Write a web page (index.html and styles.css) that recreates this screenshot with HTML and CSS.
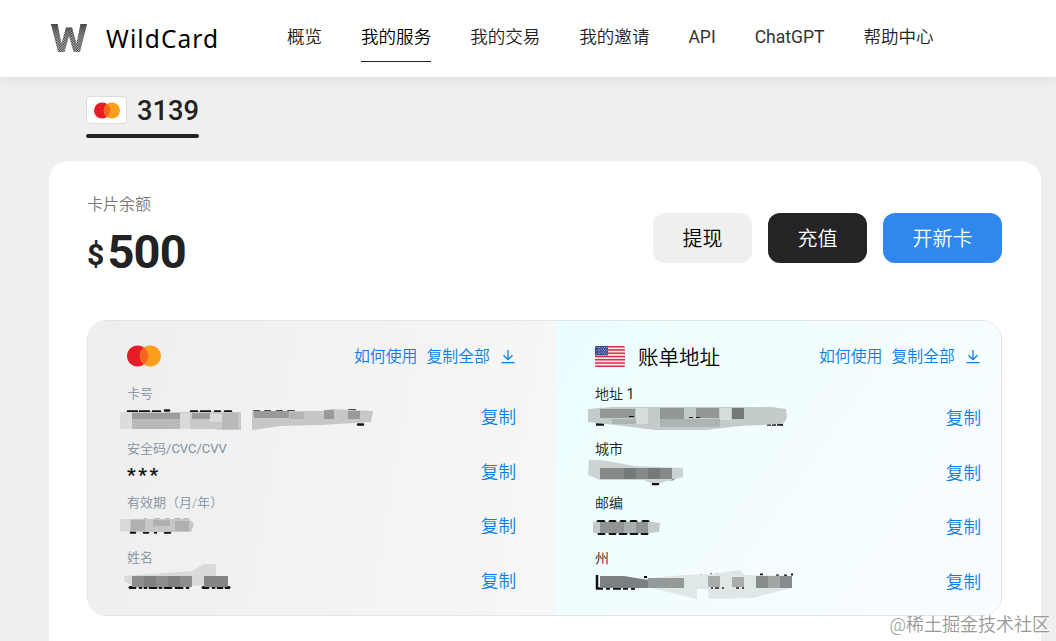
FILE: index.html
```
<!DOCTYPE html>
<html lang="zh-CN">
<head>
  <meta charset="UTF-8">
  <meta name="viewport" content="width=device-width, initial-scale=1.0">
  <title>WildCard - 我的服务</title>
  <link rel="stylesheet" href="styles.css">
</head>
<body>
<svg width="0" height="0" class="defs">
  <symbol id="mastercard" viewBox="0 0 34 22">
    <circle cx="10.6" cy="11" r="10.6" fill="#e81c24"/>
    <circle cx="23.4" cy="11" r="10.6" fill="#f99f1b"/>
    <path d="M17 2.5a10.6 10.6 0 0 1 0 17a10.6 10.6 0 0 1 0-17z" fill="#f4661e"/>
  </symbol>
  <symbol id="download" viewBox="0 0 14 15">
    <path d="M7 1v9.500M2.500 6.200L7 10.700l4.500-4.500M.5 13.700h13" fill="none" stroke="currentColor" stroke-width="1.300"/>
  </symbol>
</svg>

<header class="header">
  <a class="logo">
    <svg width="36" height="29" viewBox="0 0 36 29">
      <defs>
        <pattern id="dots" width="2.600" height="2.600" patternUnits="userSpaceOnUse">
          <rect width="2.600" height="2.600" fill="#ddd"/>
          <rect width="1.300" height="1.300" fill="#111"/>
          <rect x="1.300" y="1.300" width="1.300" height="1.300" fill="#111"/>
        </pattern>
        <linearGradient id="fade" x1="0" y1="0" x2="0" y2="1">
          <stop offset="0" stop-color="#222" stop-opacity=".6"/>
          <stop offset=".5" stop-color="#777" stop-opacity=".2"/>
          <stop offset="1" stop-color="#aaa" stop-opacity=".1"/>
        </linearGradient>
      </defs>
      <path d="M0 0h6.500l4 19.500 4.500-16h6l4.500 16 4-19.500H36l-7 28h-6.500L18 12l-4.500 16H7z" fill="url(#dots)"/>
      <path d="M0 0h6.500l4 19.500 4.500-16h6l4.500 16 4-19.500H36l-7 28h-6.500L18 12l-4.500 16H7z" fill="url(#fade)"/>
    </svg>
    <span class="logo-text">WildCard</span>
  </a>
  <nav class="nav">
    <a>概览</a>
    <a class="active">我的服务</a>
    <a>我的交易</a>
    <a>我的邀请</a>
    <a class="latin">API</a>
    <a class="latin">ChatGPT</a>
    <a>帮助中心</a>
  </nav>
</header>

<div class="tabs">
  <div class="tab">
    <span class="tab-icon"><svg width="26" height="17"><use href="#mastercard"/></svg></span>
    <span>3139</span>
  </div>
</div>

<main class="panel">
  <div class="summary">
    <div>
      <div class="balance-label">卡片余额</div>
      <div class="balance"><span class="currency">$</span>500</div>
    </div>
    <div class="actions">
      <button class="btn btn-light">提现</button>
      <button class="btn btn-dark">充值</button>
      <button class="btn btn-blue">开新卡</button>
    </div>
  </div>

  <div class="detail">
    <section class="card-info">
      <div class="detail-head">
        <svg width="34" height="22"><use href="#mastercard"/></svg>
        <div class="links">
          <a>如何使用</a>
          <a>复制全部</a>
          <svg width="14" height="15"><use href="#download"/></svg>
        </div>
      </div>
      <div class="row">
        <div class="label">卡号</div>
        <div class="value"><a class="copy">复制</a></div>
        <svg class="mask" viewBox="117 400 280 40">
          <path d="M128 411.500h9m3 0h9m4 0h7m5-1h4m22 1h6m4 0h9m5 0h5m5 0h6m23 0h5m6 0h5m7 0h5m6 0h6m31 0h2m10 0h5m7-1h6M358 424.500h5" stroke="#111" stroke-width="2.500" stroke-linecap="round"/>
          <path d="M120 412h121v18h-20l-10-1h-91z" fill="#c9c9c9"/>
          <path d="M120 412h12v17h-12z" fill="#dcdcdc"/>
          <path d="M132 413h48v6h-48zM192 413h18v6h-18z" fill="#9c9c9c"/>
          <path d="M180 413h10v16h-10zM210 414h12v8h-12z" fill="#dadada"/>
          <path d="M132 419h48v10h-48zM222 413h16v16h-16z" fill="#b9b9b9"/>
          <path d="M252 411h70l10-2 41 2-2 11-50 3-40 1-29 4z" fill="#c7c7c7"/>
          <path d="M254 411h35v7h-35zM324 410h10v9h-10zM348 411h12v8h-12z" fill="#9a9a9a"/>
          <path d="M290 412h14v7h-14z" fill="#b4b4b4"/>
        </svg>
      </div>
      <div class="row">
        <div class="label">安全码<span class="latin">/CVC/CVV</span></div>
        <div class="value"><span class="stars">***</span><a class="copy">复制</a></div>
      </div>
      <div class="row">
        <div class="label">有效期（月/年）</div>
        <div class="value"><a class="copy">复制</a></div>
        <svg class="mask" viewBox="117 509 280 40">
          <path d="M131 532.500h4m9 0h4m7 0h1m9 0h5M144 520h2m9 0h4m7 0h3m6 0h5m4 0h4" stroke="#111" stroke-width="2.500" stroke-linecap="round"/>
          <path d="M120 519h69l5 5-3 8h-50l-21-1z" fill="#c6c6c6"/>
          <path d="M120 519h10v12h-10z" fill="#d9d9d9"/>
          <path d="M131 520h14v11h-14zM153 520h17v6h-17zM175 521h14v10h-14z" fill="#b0b0b0"/>
        </svg>
      </div>
      <div class="row">
        <div class="label">姓名</div>
        <div class="value"><a class="copy">复制</a></div>
        <svg class="mask" viewBox="117 564 280 40">
          <path d="M130 587.500h5m5 0h1m4 0h1m4 0h6m4 0h1m4 0h6m5 0h6m5 0h1m15 0h5m5 0h1m4 0h4m4 0h3" stroke="#111" stroke-width="3" stroke-linecap="round"/>
          <path d="M124 576l68-5 12-7h12v12h12v10l-96-1-7-3z" fill="#dadada"/>
          <path d="M132 576h60v11h-60z" fill="#8d8d8d"/>
          <path d="M144 576h12v11h-12zM168 576h12v11h-12z" fill="#7f7f7f"/>
          <path d="M204 576h24v11h-24z" fill="#858585"/>
        </svg>
      </div>
    </section>

    <section class="address">
      <div class="detail-head">
        <div class="title">
          <svg width="30" height="21" viewBox="0 0 30 21">
            <clipPath id="round"><rect width="30" height="21" rx="1.500"/></clipPath>
            <g clip-path="url(#round)">
              <rect width="30" height="21" fill="#fbe6ea"/>
              <path d="M0 .8h30M0 4.030h30M0 7.260h30M0 10.500h30M0 13.730h30M0 16.960h30M0 20.200h30" stroke="#e02a48" stroke-width="1.620"/>
              <rect width="13" height="9.300" fill="#36458c"/>
              <path d="M1.500 1.500h11M1.500 4.600h11M1.500 7.700h11M3 3.050h9M3 6.150h9" stroke="#c3c8e2" stroke-width=".9" stroke-dasharray="1 1.500"/>
            </g>
          </svg>
          <span>账单地址</span>
        </div>
        <div class="links">
          <a>如何使用</a>
          <a>复制全部</a>
          <svg width="14" height="15"><use href="#download"/></svg>
        </div>
      </div>
      <div class="row">
        <div class="label">地址 <span class="latin">1</span></div>
        <div class="value"><a class="copy">复制</a></div>
        <svg class="mask" viewBox="585 400 280 40">
          <path d="M596 424.500h8M767 424.500h4m1 0h4m1 0h6" stroke="#111" stroke-width="2.500"/>
          <path d="M588 409l24-2h160l14 2 1 9-4 6-43 2-35 4h-50l-40-5-27-3z" fill="#c4cbcb"/>
          <path d="M600 409h35v9h-35zM660 408h24v11h-24zM696 408h23v10h-23z" fill="#929898"/>
          <path d="M732 408h12v11h-12z" fill="#747a7a"/>
          <path d="M636 408h12v16h-12zM720 408h11v12h-11z" fill="#d5dddd"/>
          <path d="M612 419h24v5h-24zM660 419h60v8h-60z" fill="#adb4b4"/>
          <path d="M629 416.500h5M689 417.500h4m3 0h4" stroke="#111" stroke-width="1.200"/>
        </svg>
      </div>
      <div class="row">
        <div class="label">城市</div>
        <div class="value"><a class="copy">复制</a></div>
        <svg class="mask" viewBox="585 455 280 40">
          <path d="M653 484h5M670 479h3" stroke="#111" stroke-width="2.500" stroke-linecap="round"/>
          <path d="M589 460h12l34 6 48 2v9l-23 6h-10l-6-3h-44l-12-5z" fill="#ccd3d3"/>
          <path d="M600 468h72v11h-72z" fill="#858989"/>
          <path d="M624 468h12v11h-12zM648 468h12v11h-12z" fill="#747979"/>
        </svg>
      </div>
      <div class="row">
        <div class="label">邮编</div>
        <div class="value"><a class="copy">复制</a></div>
        <svg class="mask" viewBox="585 509 280 40">
          <path d="M598 521.500h6m6 0h5m6 0h4m6 0h5m7 0h5M599 533.500h5m6 0h5m5 0h6m5 0h6m5 0h5" stroke="#111" stroke-width="3" stroke-linecap="round"/>
          <path d="M593 522h60l7 1-1 9-12 1h-54z" fill="#c3caca"/>
          <path d="M600 522h24v11h-24zM636 522h12v11h-12z" fill="#8f9595"/>
          <path d="M624 522h12v11h-12z" fill="#a8afaf"/>
        </svg>
      </div>
      <div class="row">
        <div class="label">州</div>
        <div class="value"><a class="copy">复制</a></div>
        <svg class="mask" viewBox="585 564 280 40">
          <path d="M597 575v14M596 588.500h7m3 0h4m3 0h8m2 0h5m3 0h4" stroke="#111" stroke-width="2.500"/>
          <path d="M644 577h3M700 575.500h2m8-1h2m4 0h2m4 0h2M760 574.500h3m13 1h3m5 0h3m4-1h2" stroke="#111" stroke-width="2"/>
          <path d="M640 579l44-4 28-1 28-4 5 5 47 1v12l-40 10-43 1-1-10h-11v10l-50-12z" fill="#e0e7e7"/>
          <path d="M711 588h2m2 0h4m3 0h2m12 0h3m3 0h2" stroke="#222" stroke-width="1.500"/>
          <path d="M600 576h24l24 4 36-2v10l-32 0h-52z" fill="#7b8181"/>
          <path d="M648 578h36v10h-36z" fill="#949a9a"/>
          <path d="M708 576h12v11h-12zM732 577h12v10h-12z" fill="#a7adad"/>
          <path d="M756 576h36v12h-36z" fill="#868c8c"/>
          <path d="M768 576h12v12h-12z" fill="#a1a7a7"/>
        </svg>
      </div>
    </section>
  </div>
</main>

<div class="watermark">@稀土掘金技术社区</div>
</body>
</html>
```
FILE: styles.css
```
* {
  box-sizing: border-box;
}
body {
  margin: 0;
  height: 641px;
  overflow: hidden;
  background-color: #efefef;
  color: #222;
  font-family: Roboto, "Noto Sans CJK SC", sans-serif;
  display: flex;
  flex-direction: column;
}
.defs {
  position: absolute;
}
.latin {
  font-weight: 400;
}
.header {
  height: 77px;
  flex: none;
  background-color: #fff;
  display: flex;
  padding-left: 51px;
  box-shadow: 0 2px 12px rgba(0, 0, 0, 0.08);
}
.logo {
  width: 236px;
  display: flex;
  align-items: center;
  gap: 19px;
}
.logo-text {
  font-family: "Noto Sans", sans-serif;
  font-size: 24.5px;
  color: #000;
  letter-spacing: 1.1px;
}
.nav {
  display: flex;
  gap: 39px;
  align-items: flex-start;
}
.nav a {
  height: 62px;
  padding-top: 12px;
  line-height: 50px;
  font-size: 17.55px;
  font-weight: 350;
  color: #222;
  white-space: nowrap;
}
.nav a.active {
  border-bottom: 1px solid #222;
  color: #000;
}
.nav a.latin {
  font-weight: 400;
  color: #333;
}
.tabs {
  height: 84px;
  flex: none;
  padding: 15px 0 0 86px;
  display: flex;
  align-items: flex-start;
}
.tab {
  display: flex;
  align-items: center;
  gap: 10px;
  height: 46px;
  padding-bottom: 8px;
  position: relative;
  font-size: 27.3px;
  font-weight: 500;
}
.tab::after {
  content: "";
  position: absolute;
  left: 0;
  right: 0;
  bottom: 0;
  height: 4px;
  border-radius: 2px;
  background-color: #222;
}
.tab-icon {
  width: 41px;
  height: 28px;
  margin-bottom: 2px;
  display: flex;
  align-items: center;
  justify-content: center;
  background-color: #fff;
  border: 1px solid #ddd;
  border-radius: 4px;
}
.panel {
  flex: 1;
  margin: 0 15px 0 49px;
  padding: 32px 39px 0 38px;
  background-color: #fff;
  border-radius: 20px 20px 0 0;
}
.summary {
  display: flex;
  justify-content: space-between;
  height: 127px;
}
.balance-label {
  font-size: 16px;
  font-weight: 350;
  line-height: 24px;
  color: #777;
}
.balance {
  font-size: 47px;
  font-weight: 700;
  line-height: 70px;
  letter-spacing: -0.8px;
}
.currency {
  font-size: 30px;
  line-height: 1;
  margin-right: 4px;
  vertical-align: 3px;
}
.actions {
  display: flex;
  gap: 16px;
  padding-top: 20px;
}
.btn {
  height: 50px;
  padding: 0 29.5px 2px;
  border: none;
  border-radius: 12px;
  font-family: inherit;
  font-size: 20px;
  font-weight: 350;
  cursor: pointer;
}
.btn-light {
  background-color: #efefef;
  color: #000;
}
.btn-dark {
  background-color: #242424;
  color: #fff;
}
.btn-blue {
  background-color: #3088ee;
  color: #fff;
}
.detail {
  display: flex;
  height: 296px;
  border: 1px solid #e3e6e6;
  border-radius: 20px;
  overflow: hidden;
}
.card-info {
  width: 467px;
  padding: 7px 39px 0 39px;
  background: linear-gradient(100deg, #eee, #f7f7f7);
}
.address {
  flex: 1;
  padding: 7px 20px 0 40px;
  background: linear-gradient(125deg, #ecfdff, #f1fdfe 40%, #fafcff);
}
.detail-head {
  height: 56px;
  display: flex;
  align-items: center;
  justify-content: space-between;
}
.title {
  display: flex;
  align-items: center;
  gap: 13px;
  font-size: 20.5px;
  font-weight: 350;
  color: #000;
}
.links {
  display: flex;
  align-items: center;
  gap: 9px;
  font-size: 15.9px;
  font-weight: 350;
  color: #087ee8;
}
.links a {
  padding-bottom: 2px;
}
.links svg {
  margin: 0 1px 0 2px;
}
.row {
  height: 54.6px;
  position: relative;
}
.label {
  height: 20px;
  line-height: 20px;
  font-size: 13px;
  font-weight: 350;
  color: #8190a0;
}
.address .label {
  font-size: 14px;
  color: #222;
}
.value {
  height: 26px;
  display: flex;
  align-items: center;
}
.address .value {
  height: 28px;
}
.stars {
  font-size: 19px;
  font-weight: 700;
  letter-spacing: 2.6px;
  padding-top: 5px;
  color: #111;
}
.copy {
  margin-left: auto;
  padding-bottom: 3px;
  font-size: 17.6px;
  font-weight: 350;
  color: #087ee8;
}
.mask {
  position: absolute;
  left: -10px;
  top: 16px;
  width: 280px;
  height: 40px;
}
.watermark {
  position: absolute;
  right: 6px;
  bottom: 1px;
  font-size: 18px;
  font-weight: 350;
  line-height: 30px;
  color: #999;
  text-shadow: 0 0 2px #fff;
}
```
